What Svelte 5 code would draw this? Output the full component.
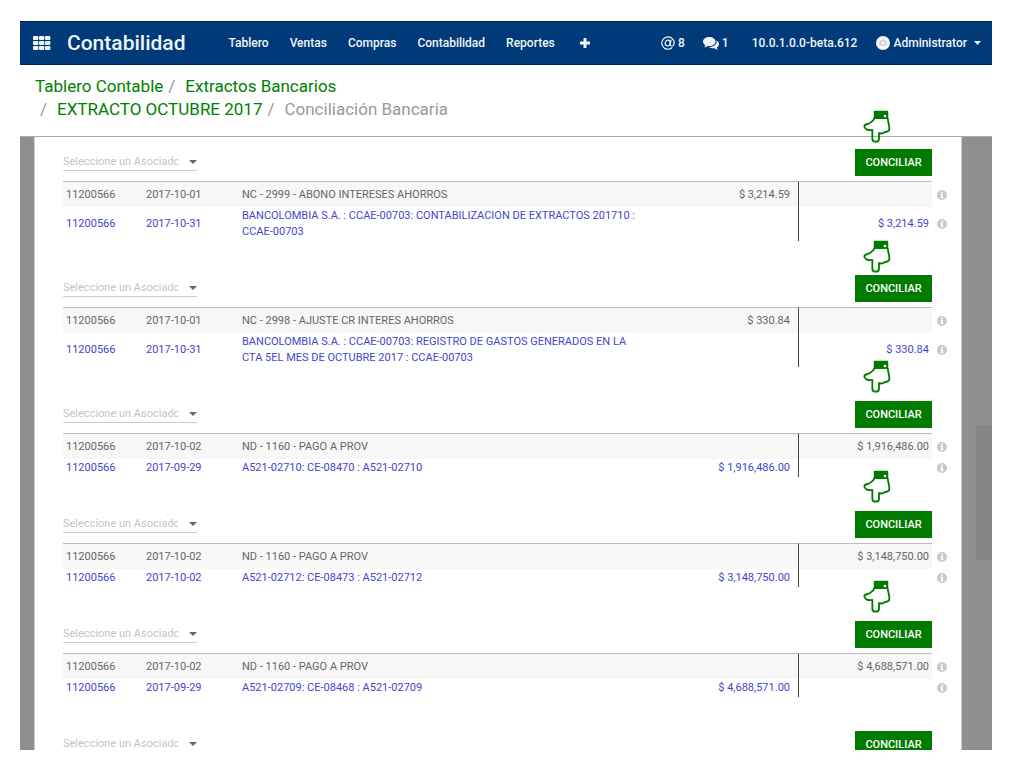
<script>
  const menus = ['Tablero', 'Ventas', 'Compras', 'Contabilidad', 'Reportes'];

  const groups = [
    {
      lift: 39,
      lines: [
        { account: '11200566', date: '2017-10-01', label: 'NC - 2999 - ABONO INTERESES AHORROS', debit: '$ 3,214.59', credit: '' },
        { account: '11200566', date: '2017-10-31', label: 'BANCOLOMBIA S.A. : CCAE-00703: CONTABILIZACION DE EXTRACTOS 201710 : CCAE-00703', debit: '', credit: '$ 3,214.59' }
      ]
    },
    {
      lift: 35,
      lines: [
        { account: '11200566', date: '2017-10-01', label: 'NC - 2998 - AJUSTE CR INTERES AHORROS', debit: '$ 330.84', credit: '' },
        { account: '11200566', date: '2017-10-31', label: 'BANCOLOMBIA S.A. : CCAE-00703: REGISTRO DE GASTOS GENERADOS EN LA CTA 5EL MES DE OCTUBRE 2017 : CCAE-00703', debit: '', credit: '$ 330.84' }
      ]
    },
    {
      lift: 41,
      lines: [
        { account: '11200566', date: '2017-10-02', label: 'ND - 1160 - PAGO A PROV', debit: '', credit: '$ 1,916,486.00' },
        { account: '11200566', date: '2017-09-29', label: 'A521-02710: CE-08470 : A521-02710', debit: '$ 1,916,486.00', credit: '' }
      ]
    },
    {
      lift: 41,
      lines: [
        { account: '11200566', date: '2017-10-02', label: 'ND - 1160 - PAGO A PROV', debit: '', credit: '$ 3,148,750.00' },
        { account: '11200566', date: '2017-10-02', label: 'A521-02712: CE-08473 : A521-02712', debit: '$ 3,148,750.00', credit: '' }
      ]
    },
    {
      lift: 41,
      lines: [
        { account: '11200566', date: '2017-10-02', label: 'ND - 1160 - PAGO A PROV', debit: '', credit: '$ 4,688,571.00' },
        { account: '11200566', date: '2017-09-29', label: 'A521-02709: CE-08468 : A521-02709', debit: '$ 4,688,571.00', credit: '' }
      ]
    },
    { lift: 0, lines: [] }
  ];
</script>

<div class="window">
  <nav class="navbar">
    <button class="apps" aria-label="Aplicaciones">
      <svg width="18" height="14" viewBox="0 0 18 14" fill="currentColor">
        {#each [0, 5, 10] as y}
          {#each [0, 6, 12] as x}
            <rect {x} {y} width="5.400" height="4" rx="1" />
          {/each}
        {/each}
      </svg>
    </button>
    <a class="brand" href="#inicio">Contabilidad</a>
    <div class="menus">
      {#each menus as menu}
        <a href="#{menu}">{menu}</a>
      {/each}
      <button aria-label="Más">
        <svg width="10" height="10" viewBox="0 0 10 10" fill="currentColor"><path d="M3.500 0h3v3.500H10v3H6.500V10h-3V6.500H0v-3h3.500z" /></svg>
      </button>
    </div>
    <div class="systray">
      <button class="mentions">
        <svg width="14" height="14" viewBox="0 0 14 14" fill="none" stroke="currentColor" stroke-width="1.200" stroke-linecap="round">
          <path d="M11 11.800A6.200 6.200 0 1 1 13.200 6.600C13.200 8.800 12 10 10.700 10 9.500 10 9 9.200 9.200 8.200L10 4.200" />
          <ellipse cx="6.700" cy="7" rx="2.400" ry="2.900" transform="rotate(15 6.700 7)" />
        </svg>
        <span>8</span>
      </button>
      <button class="chats">
        <svg width="16" height="13" viewBox="0 0 16 13" fill="currentColor">
          <path d="M6.300 0C9.800 0 12.500 2 12.500 4.500S9.800 9 6.300 9C5.700 9 5.200 9 4.700 8.900 3.700 9.700 2.500 10.200 1.200 10.300 1.800 9.700 2.200 9 2.300 8.100 .9 7.300 0 6 0 4.500 0 2 2.800 0 6.300 0z" />
          <path d="M13.500 3.500C15 4.200 16 5.500 16 7 16 8.400 15.200 9.600 13.900 10.400 14 11.300 14.400 12 15 12.600 13.600 12.500 12.300 12 11.300 11.200 9.300 11.500 7.300 11.100 5.900 10 10.300 10.100 13.700 7.600 13.600 4.500z" />
        </svg>
        <span>1</span>
      </button>
      <span class="version">10.0.1.0.0-beta.612</span>
      <button class="user">
        <svg width="14" height="14" viewBox="0 0 14 14">
          <circle cx="7" cy="7" r="7" fill="#f6f6f6" />
          <path d="M3.500 4.500h1.800l.7-1h2l.7 1h1.800v5.200h-7z" fill="#cfcfcf" />
          <circle cx="7" cy="7" r="1.600" fill="#eee" stroke="#f6f6f6" stroke-width=".5" />
        </svg>
        <span>Administrator</span>
        <svg width="7" height="4" viewBox="0 0 7 4" fill="currentColor"><path d="M0 0h7L3.500 4z" /></svg>
      </button>
    </div>
  </nav>

  <header class="control">
    <ol>
      <li><a href="#tablero">Tablero Contable</a></li>
      <li><a href="#extractos">Extractos Bancarios</a></li>
      <li><a href="#octubre">EXTRACTO OCTUBRE 2017</a></li>
      <li>Conciliación Bancaria</li>
    </ol>
  </header>

  <main>
    <div class="sheet">
      {#each groups as group}
        <section>
          <div class="toolbar">
            <label class="partner">
              <input type="text" placeholder="Seleccione un Asociado" aria-label="Seleccione un Asociado" />
              <svg width="8" height="4" viewBox="0 0 8 4" fill="#666"><path d="M0 0h8L4 4z" /></svg>
            </label>
            <div class="action">
              <button class="reconcile">CONCILIAR</button>
              {#if group.lift}
                <svg class="hand" style="top: -{group.lift}px" width="28" height="34" viewBox="0 0 84 102" fill="none" stroke="#007b00" stroke-width="5.500" stroke-linejoin="round">
                  <path d="M36 22C33 29 28 35 21 39C15 43 4 42 4 49C4 57 13 61 28 60V86C28 92 32 95 38 95S48 92 48 86V69C55 72 61 70 66 66C77 66 80 60 79 52C78 42 75 36 74 24" />
                  <path d="M35 5H73V24H35z" fill="#007b00" />
                  <circle cx="66" cy="18" r="4" fill="#fff" stroke="none" />
                </svg>
              {/if}
            </div>
          </div>
          {#if group.lines.length}
            <table>
              <tbody>
                {#each group.lines as line}
                  <tr>
                    <td class="account">{line.account}</td>
                    <td class="date">{line.date}</td>
                    <td class="label">{line.label}</td>
                    <td class="debit">{line.debit}</td>
                    <td class="credit">{line.credit}</td>
                    <td class="info">
                      <svg width="10" height="10" viewBox="0 0 10 10">
                        <circle cx="5" cy="5" r="5" fill="#c8c8c8" />
                        <path d="M4.200 1.500h1.700v1.400H4.200zM3.500 3.800h2.400v3.400h.7v1.100H3.500V7.200h.7V4.900h-.7z" fill="#fff" />
                      </svg>
                    </td>
                  </tr>
                {/each}
              </tbody>
            </table>
          {/if}
        </section>
      {/each}
    </div>
    <div class="thumb"></div>
  </main>
</div>

<style>
  :global(body) {
    background: #fff;
  }
  .window {
    display: flex;
    flex-direction: column;
    box-sizing: border-box;
    height: calc(100vh - 39px);
    margin: 21px 32px 18px 20px;
    overflow: hidden;
    font: 11px/16px Roboto, "Liberation Sans", sans-serif;
    color: #666;
  }
  button {
    padding: 0;
    border: 0;
    background: none;
    color: inherit;
    font: inherit;
    cursor: pointer;
  }
  a {
    color: inherit;
    text-decoration: none;
  }
  svg {
    display: block;
  }
  .navbar {
    display: flex;
    flex: none;
    align-items: center;
    box-sizing: border-box;
    height: 44px;
    padding: 0 11px 0 13px;
    border: solid #00254d;
    border-width: 1px 0;
    background: #003a78;
    color: #f0f4f8;
    font-size: 12px;
    font-weight: 500;
  }
  .brand {
    margin: 0 43px 0 16px;
    font-size: 21px;
    line-height: 24px;
  }
  .menus {
    display: flex;
    align-items: center;
    gap: 21px;
  }
  .menus button {
    margin-left: 4px;
  }
  .systray {
    display: flex;
    align-items: center;
    margin-left: auto;
  }
  .systray button {
    display: flex;
    align-items: center;
    gap: 3px;
  }
  .chats {
    margin-left: 18px;
  }
  .version {
    margin: 0 19px 0 23px;
  }
  .systray .user span {
    margin-right: 4px;
  }
  .control {
    flex: none;
    box-sizing: border-box;
    height: 72px;
    padding: 10px 15px 0;
    border-bottom: 1px solid #aaa;
    color: #999;
    font-size: 17px;
    line-height: 23px;
  }
  ol {
    display: flex;
    flex-wrap: wrap;
    max-width: 440px;
    margin: 0;
    padding: 0;
    list-style: none;
  }
  li + li::before {
    padding: 0 10px 0 5px;
    content: "/";
  }
  li a {
    color: #008000;
  }
  main {
    position: relative;
    flex: 1;
    min-height: 0;
    padding: 0 30px 0 14px;
    background: #8f8f8f;
  }
  .sheet {
    box-sizing: border-box;
    min-height: 100%;
    padding: 12px 10px 0 28px;
    border: solid #ccc;
    border-width: 0 1px;
    background: #fff;
  }
  .thumb {
    position: absolute;
    top: 288px;
    right: 0;
    width: 16px;
    height: 135px;
    background: #868686;
  }
  section {
    margin-bottom: 34px;
  }
  .toolbar {
    display: flex;
    align-items: flex-start;
    justify-content: space-between;
    margin: 0 19px 5px 0;
  }
  .partner {
    display: flex;
    align-items: center;
    gap: 11px;
    box-sizing: border-box;
    width: 134px;
    height: 22px;
    padding-top: 4px;
    border-bottom: 1px solid #ccc;
  }
  input {
    width: 115px;
    padding: 0;
    border: 0;
    outline: 0;
    background: none;
    color: #666;
    font: inherit;
  }
  input::placeholder {
    color: #c4c4c4;
    opacity: 1;
  }
  .action {
    position: relative;
  }
  .reconcile {
    display: block;
    width: 77px;
    height: 27px;
    background: #007b00;
    color: #fff;
    font-weight: 500;
  }
  .hand {
    position: absolute;
    left: 8px;
    pointer-events: none;
  }
  table {
    width: 100%;
    table-layout: fixed;
    border-collapse: separate;
    border-spacing: 0;
  }
  td {
    padding: 1px 3px;
    color: #4444d0;
    vertical-align: middle;
  }
  tr:first-child td {
    padding-top: 5px;
    padding-bottom: 4px;
    border-top: 1px solid #bbb;
    background: #f7f7f7;
    color: #666;
  }
  td.label {
    padding-right: 24px;
  }
  .account {
    width: 74px;
  }
  .date {
    width: 90px;
  }
  .debit {
    width: 120px;
    padding-right: 8px;
    border-right: 1px solid #444;
    text-align: right;
  }
  .credit {
    width: 127px;
    text-align: right;
  }
  .info {
    width: 11px;
  }
  td.info {
    padding-right: 3px;
    padding-left: 5px;
  }
  tr:first-child td.info {
    border-top-color: transparent;
    background: none;
  }
</style>
